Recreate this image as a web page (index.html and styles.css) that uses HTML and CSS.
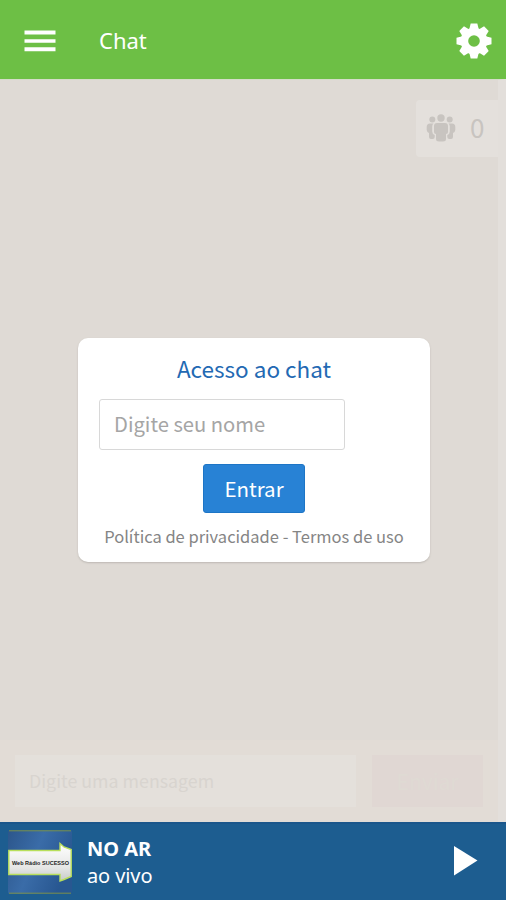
FILE: index.html
```html
<!DOCTYPE html>
<html lang="pt-BR">
<head>
<meta charset="utf-8">
<title>Chat</title>
<link rel="stylesheet" href="styles.css">
</head>
<body>
<div class="app">
  <header class="bar">
    <svg class="menu" viewBox="0 0 32 22"><path d="M0.500 0.500h31v4h-31zM0.500 9.200h31v3.500h-31zM0.500 17.200h31v4h-31z"/></svg>
    <h1 class="title">Chat</h1>
    <svg class="gear" viewBox="-18 -18 36 36">
      <circle r="13.300"/>
      <g id="teeth"><path d="M-3.300-17.500h6.600l1.500 6v23l-1.500 6h-6.600l-1.500-6v-23z"/><path d="M-3.300-17.500h6.600l1.500 6v23l-1.500 6h-6.600l-1.500-6v-23z" transform="rotate(90)"/><path d="M-3.300-17.500h6.600l1.500 6v23l-1.500 6h-6.600l-1.500-6v-23z" transform="rotate(45)"/><path d="M-3.300-17.500h6.600l1.500 6v23l-1.500 6h-6.600l-1.500-6v-23z" transform="rotate(-45)"/></g>
      <circle class="hub" r="5.800"/>
    </svg>
  </header>
  <main class="room">
    <div class="online">
      <svg class="people" viewBox="0 0 30 28"><circle cx="15" cy="4" r="3.700"/><circle cx="6.300" cy="5.500" r="3"/><circle cx="23.700" cy="5.500" r="3"/><path d="M11 9h8q3 0 3 3v6q0 2-2 2v5q0 2.500-3 2.500h-4q-3 0-3-2.500v-5q-2 0-2-2v-6q0-3 3-3zM4 9.500h3.500q-1.300 1-1.300 3v5q0 2.500 2.500 3.500v2q0 2-2 2H5q-2 0-2-2v-4q-2-.5-2.300-3v-3Q.7 9.500 4 9.500zM26 9.500h-3.500q1.300 1 1.300 3v5q0 2.500-2.500 3.500v2q0 2 2 2H25q2 0 2-2v-4q2-.5 2.300-3v-3q0-3.500-3.300-3.500z"/></svg>
      <span>0</span>
    </div>
    <section class="card">
      <h2 class="heading">Acesso ao chat</h2>
      <div class="name">Digite seu nome</div>
      <button class="enter">Entrar</button>
      <p class="links">Política de privacidade - Termos de uso</p>
    </section>
    <div class="composer">
      <div class="message">Digite uma mensagem</div>
      <div class="send">Enviar</div>
    </div>
  </main>
  <footer class="player">
    <svg class="cover" viewBox="0 0 64 64">
      <defs>
        <linearGradient id="sky" x1="0" y1="0" x2="1" y2="0.400"><stop offset="0" stop-color="#2c568b"/><stop offset=".5" stop-color="#3a6ca8"/><stop offset="1" stop-color="#285791"/></linearGradient>
        <linearGradient id="arrow" x1="0" y1="0" x2="0" y2="1"><stop offset="0" stop-color="#fff"/><stop offset=".65" stop-color="#e5e6e5"/><stop offset="1" stop-color="#c6cac8"/></linearGradient>
      </defs>
      <rect width="64" height="64" rx="2" fill="url(#sky)"/>
      <path d="M1 .8h62M1 63.200h62" stroke="#77904b"/>
      <path d="M.8 20.500h51.200v-7l4 3.500 7.200 2.500v27L56 49.500l-4 1.500v-6.500H.8z" fill="url(#arrow)" stroke="#b8df5b" stroke-width="1.400"/>
      <text class="cover-text" x="4" y="35" textLength="57" lengthAdjust="spacingAndGlyphs">Web Rádio SUCESSO</text>
    </svg>
    <div class="track"><strong class="show">NO AR</strong><span class="live">ao vivo</span></div>
    <svg class="play" viewBox="0 0 24 30"><path d="M0 0l23.500 14.500L0 29.500z"/></svg>
  </footer>
</div>
</body>
</html>
```
FILE: styles.css
```css
* { box-sizing: border-box; }
body { margin: 0; font-family: "Noto Sans CJK SC", "Noto Sans", sans-serif; }
.app { width: 506px; height: 900px; display: flex; flex-direction: column; overflow: hidden; }
.bar { height: 79px; background: #6dbf45; display: flex; align-items: center; padding: 2px 14px 0 24px; color: #fff; }
.menu { width: 32px; height: 22px; fill: #fff; }
.title { margin: 0 auto 2px 43px; font: 400 22px/30px "Noto Sans", sans-serif; }
.gear { width: 36px; height: 36px; fill: #fff; }
.hub { fill: #6dbf45; }
.room { height: 743px; background: #dfdad5; border-top: 1px solid #d5dcc9; border-right: 8px solid #e3dfdb; display: flex; flex-direction: column; }
.online { width: 82px; height: 57px; margin: 20px 0 0; align-self: flex-end; background: #e4e0dc; border-radius: 4px 0 0 4px; display: flex; align-items: center; padding: 0 0 1px 10px; gap: 14px; color: #c8c4c0; font-size: 26px; line-height: 36px; }
.online span { margin-bottom: 3px; }
.people { width: 30px; height: 28px; fill: #c8c4c0; }
.card { width: 352px; height: 224px; margin: 181px 0 0 78px; padding: 13px 21px 0; background: #fff; border-radius: 10px; box-shadow: 0 1px 2px #bdb8b3; display: flex; flex-direction: column; align-items: center; }
.heading { margin: 0; font-size: 22.5px; line-height: 34px; font-weight: 400; color: #2369b3; white-space: nowrap; }
.name { align-self: flex-start; width: 246px; height: 51px; margin-top: 14px; border: 1px solid #d8d8d8; border-radius: 3px; padding-left: 14px; font-size: 20.2px; line-height: 48px; color: #a5a5a5; white-space: nowrap; }
.enter { width: 102px; height: 49px; margin-top: 14px; padding: 0 0 2px; border: 1px solid #1d75c6; border-radius: 3px; background: #2882d5; color: #fff; font: 400 20.5px/44px "Noto Sans CJK SC", sans-serif; }
.links { margin: 10px 0 0; font-size: 16.5px; line-height: 26px; color: #858585; white-space: nowrap; }
.composer { height: 82px; margin-top: auto; background: #e2dcd6; display: flex; padding: 15px 0 0 15px; gap: 16px; }
.message { width: 341px; height: 52px; padding-left: 14px; background: #e4e0db; color: #d8d4cf; font-size: 17.8px; line-height: 51px; }
.send { width: 111px; height: 52px; background: #e0d7d3; color: #dfdad3; text-align: center; font-size: 21px; line-height: 52px; }
.player { height: 78px; background: #1d5d90; border-top: 2px solid #1b568b; display: flex; align-items: center; padding: 0 28px 0 8px; color: #fff; }
.cover { width: 64px; height: 64px; flex: none; }
.cover-text { font: 700 6px "Liberation Sans", sans-serif; fill: #252525; }
.track { margin: -1px auto 0 15px; display: flex; flex-direction: column; }
.show { font: 700 20px/27px "Noto Sans", sans-serif; }
.live { font: 400 20px/27px "Noto Sans", sans-serif; letter-spacing: -0.1px; }
.play { width: 24px; height: 30px; margin-top: -2px; fill: #fff; }
```
